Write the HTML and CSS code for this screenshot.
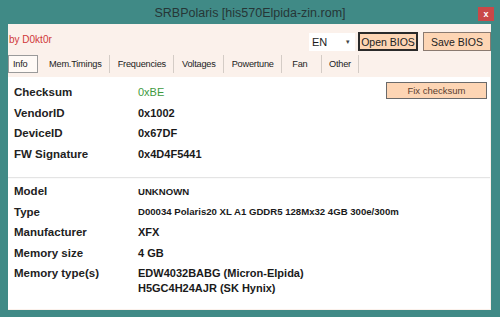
FILE: index.html
```html
<html><head>
<title>SRBPolaris</title>
<link rel="stylesheet" href="styles.css">
</head>
<body>
<div class="window">
  <div class="titlebar">
    <span class="title">SRBPolaris [his570Elpida-zin.rom]</span>
    <span class="close">x</span>
  </div>
  <div class="client">
    <div class="toprow">
      <span class="author">by D0kt0r</span>
      <div class="controls">
        <div class="lang"><span>EN</span><span class="arrow">&#9662;</span></div>
        <button class="btn focus">Open BIOS</button>
        <button class="btn save">Save BIOS</button>
      </div>
    </div>
    <div class="tabs">
      <span class="tab sel">Info</span>
      <span class="tab">Mem.Timings</span>
      <span class="tab">Frequencies</span>
      <span class="tab">Voltages</span>
      <span class="tab">Powertune</span>
      <span class="tab wide">Fan</span>
      <span class="tab">Other</span>
    </div>
    <div class="panel">
      <div class="section top">
        <div class="grid">
          <span class="lbl">Checksum</span><span class="val ok">0xBE</span>
          <span class="lbl">VendorID</span><span class="val">0x1002</span>
          <span class="lbl">DeviceID</span><span class="val">0x67DF</span>
          <span class="lbl">FW Signature</span><span class="val">0x4D4F5441</span>
        </div>
        <button class="btn fix">Fix checksum</button>
      </div>
      <div class="sep"></div>
      <div class="section">
        <div class="grid">
          <span class="lbl">Model</span><span class="val sm">UNKNOWN</span>
          <span class="lbl">Type</span><span class="val sm">D00034 Polaris20 XL A1 GDDR5 128Mx32 4GB 300e/300m</span>
          <span class="lbl">Manufacturer</span><span class="val">XFX</span>
          <span class="lbl">Memory size</span><span class="val">4 GB</span>
          <span class="lbl">Memory type(s)</span><span class="val multi">EDW4032BABG (Micron-Elpida)<br>H5GC4H24AJR (SK Hynix)</span>
        </div>
      </div>
    </div>
  </div>
</div>
</body>
</html>
```

FILE: styles.css
```css
body { margin: 0; font-family: "Liberation Sans", Arial, sans-serif; color: #1c1c1c; }
.window { width: 500px; height: 317px; background: #408a86; display: flex; flex-direction: column; }
.titlebar { height: 24px; display: flex; align-items: center; justify-content: center; position: relative; }
.title { font-size: 12.5px; color: #263636; padding-top: 2px; }
.close { position: absolute; right: 6px; top: 7px; width: 16px; height: 14px; background: #c94848; color: #fff; font-size: 9px; font-weight: bold; display: flex; align-items: center; justify-content: center; }
.client { margin: 0 9px 7px 8px; flex: 1; background: #fbf1eb; display: flex; flex-direction: column; }
.toprow { height: 27px; display: flex; justify-content: space-between; align-items: flex-end; }
.author { color: #d03838; font-size: 10px; padding-left: 1px; align-self: center; padding-top: 3px; }
.controls { display: flex; gap: 3px; align-items: center; }
.lang { width: 46px; height: 18px; background: #fff; display: flex; justify-content: space-between; align-items: center; font-size: 11px; padding: 0 5px 0 3px; box-sizing: border-box; }
.arrow { font-size: 7px; color: #444; }
.btn { font-family: inherit; font-size: 10.5px; color: #222; background: #fdd5b4; border: 1px solid #8a7a70; height: 19px; padding: 0; }
.btn.focus { width: 60px; border: 2px solid #2a2a2a; }
.btn.save { width: 68px; margin-left: 2px; }
.tabs { height: 23px; display: flex; align-items: center; margin-top: 1px; font-size: 9.2px; letter-spacing: -0.2px; color: #222; }
.tab { padding: 0 7.5px; border-right: 1px solid #d4ccc6; line-height: 18px; }
.tab.wide { padding: 0 13px 0 10px; }
.tab.sel { border: 1px solid #9a9a9a; background: #fffaf6; padding: 0 9px 0 4px; margin-right: 4px; line-height: 16px; }
.panel { flex: 1; background: #fff; margin: 2px 1px 1px 0; display: flex; flex-direction: column; }
.section { display: flex; justify-content: space-between; align-items: flex-start; padding: 2px 3px 0 6px; }
.section.top { padding-top: 5px; padding-bottom: 13px; }
.grid { display: grid; grid-template-columns: 124px auto; grid-auto-rows: 20.5px; align-items: center; }
.lbl { font-weight: bold; font-size: 11.5px; color: #222; }
.val { font-weight: bold; font-size: 11px; color: #1a1a1a; }
.val.ok { color: #3e9a3e; font-weight: normal; }
.val.sm { font-size: 9.6px; }
.val.multi { line-height: 15px; grid-row: span 2; align-self: start; padding-top: 3px; }
.btn.fix { width: 101px; height: 17px; font-size: 9.5px; color: #5a4030; border: 1px solid #6a6a6a; margin-top: 0; }
.sep { height: 1px; background: #e4e4e4; border-bottom: 1px solid #fafafa; }
```
